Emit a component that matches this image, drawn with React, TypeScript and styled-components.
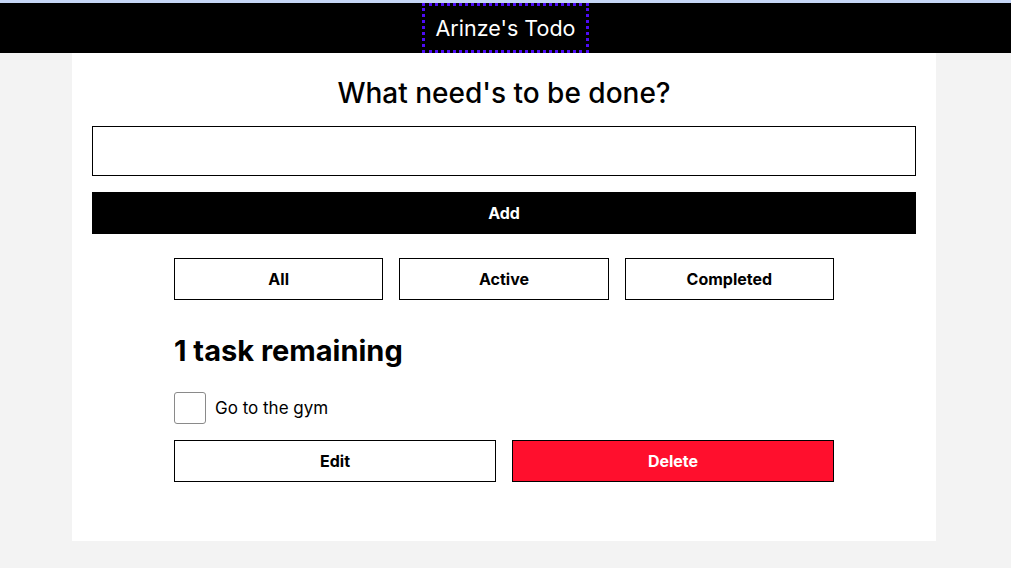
import styled, { createGlobalStyle } from "styled-components";

const GlobalStyle = createGlobalStyle`
  body {
    margin: 0;
    background: #f3f3f3;
    font-family: Inter, "Liberation Sans", sans-serif;
    color: #000;
  }
`;

const Header = styled.header`
  background: #000;
  border-top: 3px solid #c6d6f6;
  height: 50px;
  display: flex;
  justify-content: center;
`;

const Brand = styled.h1`
  margin: 0;
  padding: 0 14px;
  display: flex;
  align-items: center;
  color: #fff;
  font-size: 21.5px;
  font-weight: 400;
  outline: 3px dotted #4d0bf7;
  outline-offset: -3px;
`;

const Card = styled.main`
  width: 864px;
  margin: 0 auto 0 72px;
  background: #fff;
  padding: 22px 20px 59px;
  box-sizing: border-box;
`;

const Form = styled.form`
  display: flex;
  flex-direction: column;
`;

const Title = styled.h2`
  margin: 0 0 15px;
  text-align: center;
  font-size: 28px;
  font-weight: 500;
  line-height: 36px;
`;

const TextInput = styled.input`
  height: 50px;
  border: 1px solid #000;
  box-sizing: border-box;
  font-size: 18px;
  padding: 0 10px;
  margin-bottom: 16px;
`;

const Button = styled.button<{ $variant?: "dark" | "danger" | "light" }>`
  height: 42px;
  box-sizing: border-box;
  border: 1px solid #000;
  font-family: inherit;
  font-size: 16px;
  font-weight: 700;
  cursor: pointer;
  background: ${(p) =>
    p.$variant === "dark" ? "#000" : p.$variant === "danger" ? "#ff0f2d" : "#fff"};
  color: ${(p) => (p.$variant === "light" || !p.$variant ? "#000" : "#fff")};
`;

const Inner = styled.div`
  width: 660px;
  margin: 24px auto 0;
`;

const Filters = styled.div`
  display: grid;
  grid-template-columns: repeat(3, 1fr);
  gap: 16px;
`;

const Remaining = styled.h2`
  margin: 34px 0 24px;
  font-size: 29px;
  font-weight: 700;
  line-height: 34px;
`;

const TodoRow = styled.div`
  display: flex;
  align-items: center;
  gap: 9px;
  margin-bottom: 16px;
`;

const Check = styled.input`
  appearance: none;
  width: 32px;
  height: 32px;
  margin: 0;
  border: 1px solid #8a8a8a;
  border-radius: 3px;
  background: #fff;
`;

const Label = styled.label`
  font-size: 17px;
`;

const Actions = styled.div`
  display: grid;
  grid-template-columns: 1fr 1fr;
  gap: 16px;
`;

export default function App() {
  return (
    <>
      <GlobalStyle />
      <Header>
        <Brand>Arinze's Todo</Brand>
      </Header>
      <Card>
        <Form onSubmit={(e) => e.preventDefault()}>
          <Title>What need's to be done?</Title>
          <TextInput type="text" />
          <Button $variant="dark" type="submit">
            Add
          </Button>
        </Form>
        <Inner>
          <Filters>
            <Button>All</Button>
            <Button>Active</Button>
            <Button>Completed</Button>
          </Filters>
          <Remaining>1 task remaining</Remaining>
          <TodoRow>
            <Check type="checkbox" id="todo-0" />
            <Label htmlFor="todo-0">Go to the gym</Label>
          </TodoRow>
          <Actions>
            <Button>Edit</Button>
            <Button $variant="danger">Delete</Button>
          </Actions>
        </Inner>
      </Card>
    </>
  );
}
